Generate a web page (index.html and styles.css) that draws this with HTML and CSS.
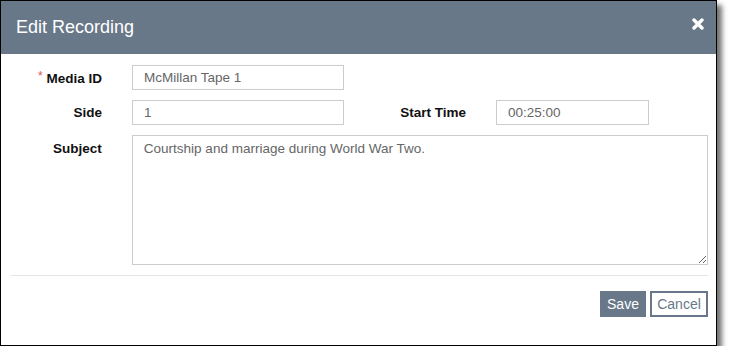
FILE: index.html
```html
<!DOCTYPE html>
<html>
<head>
    <title>Edit Recording</title>
    <link rel="stylesheet" href="styles.css">
</head>
<body>
    <div class="dialog">
        <div class="dialog-header">
            <h1>Edit Recording</h1>
            <button class="close" type="button" aria-label="Close">
                <svg width="12" height="12" viewBox="0 0 12 12">
                    <path d="M2 2 L10 10 M10 2 L2 10" stroke="#fff" stroke-width="3.4" stroke-linecap="round"/>
                </svg>
            </button>
        </div>
        <form class="dialog-body">
            <div class="row">
                <label class="label"><span class="req">*</span> Media ID</label>
                <input class="field wide" type="text" value="McMillan Tape 1">
            </div>
            <div class="row">
                <label class="label">Side</label>
                <input class="field wide" type="text" value="1">
                <label class="label label-second">Start Time</label>
                <input class="field narrow" type="text" value="00:25:00">
            </div>
            <div class="row">
                <label class="label label-top">Subject</label>
                <textarea class="field subject">Courtship and marriage during World War Two.</textarea>
            </div>
        </form>
        <div class="dialog-footer">
            <button class="btn btn-save" type="button">Save</button>
            <button class="btn btn-cancel" type="button">Cancel</button>
        </div>
    </div>
</body>
</html>
```

FILE: styles.css
```css
body {
    margin: 0;
    background: #fff;
    font-family: Arial, "Liberation Sans", sans-serif;
}
.dialog {
    width: 717px;
    box-sizing: border-box;
    border: 1px solid #000;
    background: #fff;
    box-shadow: 5px 5px 5px rgba(0, 0, 0, 0.55);
}
.dialog-header {
    height: 53px;
    background-color: #687889;
    display: flex;
    align-items: center;
    justify-content: space-between;
    padding: 0 12px 0 15px;
}
.dialog-header h1 {
    margin: 0;
    color: #fff;
    font-size: 18px;
    font-weight: normal;
}
.close {
    background: none;
    border: none;
    padding: 0;
    margin-top: -8px;
    cursor: pointer;
    display: flex;
}
.dialog-body {
    padding: 11px 8px 10px 0;
    display: flex;
    flex-direction: column;
    gap: 10px;
}
.row {
    display: flex;
    align-items: center;
}
.label {
    width: 101px;
    text-align: right;
    margin-right: 30px;
    font-size: 13.5px;
    font-weight: bold;
    color: #111;
}
.label-second {
    width: 122px;
}
.label-top {
    align-self: flex-start;
    padding-top: 6px;
}
.req {
    color: #d9534f;
    font-weight: normal;
    font-size: 12px;
    vertical-align: 3px;
}
.field {
    box-sizing: border-box;
    height: 25px;
    border: 1px solid #ccc;
    padding: 2px 11px;
    font-family: Arial, "Liberation Sans", sans-serif;
    font-size: 13.5px;
    color: #666;
    margin: 0;
}
.wide {
    width: 212px;
}
.narrow {
    width: 153px;
}
.subject {
    width: 577px;
    height: 130px;
    padding: 5px 11px;
    resize: vertical;
}
.dialog-footer {
    margin: 0 8px 0 10px;
    border-top: 1px solid #e5e5e5;
    padding: 15px 0 28px;
    display: flex;
    justify-content: flex-end;
    gap: 4px;
}
.btn {
    box-sizing: border-box;
    height: 26px;
    font-family: Arial, "Liberation Sans", sans-serif;
    font-size: 14px;
    padding: 0 4px;
    cursor: pointer;
}
.btn-save {
    width: 46px;
    background-color: #687889;
    color: #fff;
    border: none;
}
.btn-cancel {
    width: 58px;
    background: #fff;
    color: #687889;
    border: 2px solid #687889;
}
```
